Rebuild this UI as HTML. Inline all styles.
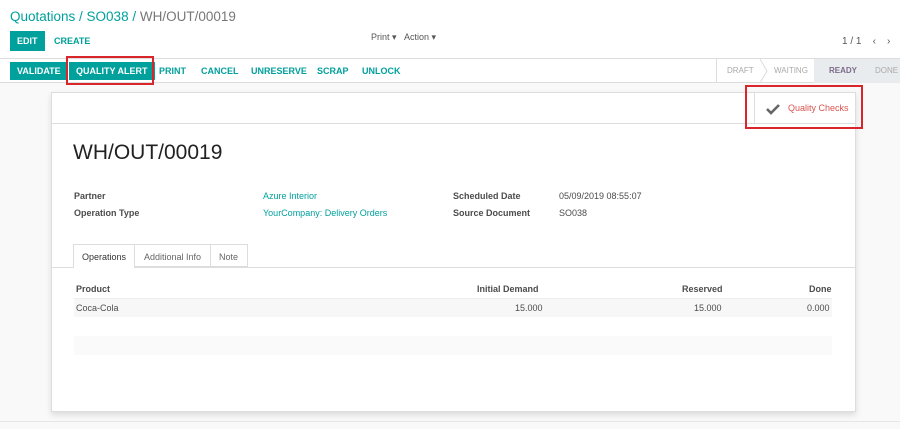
<!DOCTYPE html>
<html><head><style>
*{box-sizing:border-box;margin:0;padding:0}
body{width:900px;height:429px;overflow:hidden;background:#f9f9f9;font-family:"Liberation Sans",sans-serif;font-size:9px;color:#4c4c4c;position:relative}
.a{position:absolute;white-space:nowrap}
.teal{color:#00a09d}
.top{position:absolute;left:0;top:0;width:900px;height:59px;background:#fff;border-bottom:1px solid #ddd}
.sb{position:absolute;left:0;top:59px;width:900px;height:24px;background:#fff;border-bottom:1px solid #ddd}
.btn{position:absolute;font-weight:bold;font-size:9px;height:18px;line-height:18px;padding:0 7px}
.sheet{position:absolute;left:51px;top:92px;width:805px;height:320px;background:#fff;border:1px solid #ddd;box-shadow:0 3px 6px rgba(0,0,0,.12)}
b{color:#4c4c4c}
</style></head><body>
<div class="top"></div>
<div class="a" style="left:10px;top:9px;font-size:13.5px;color:#00a09d">Quotations / SO038 / <span style="color:#777">WH/OUT/00019</span></div>
<div class="btn" style="left:10px;top:31px;height:20px;line-height:20px;background:#00a09d;color:#fff">EDIT</div>
<div class="btn teal" style="left:47px;top:32px">CREATE</div>
<div class="a" style="left:371px;top:32px;color:#555">Print ▾ &nbsp;&nbsp;Action ▾</div>
<div class="a" style="left:842px;top:36px;color:#555;font-size:10px">1 / 1 &nbsp;&nbsp; ‹ &nbsp;&nbsp; ›</div>
<div class="sb"></div>
<div class="btn" style="left:10px;top:62px;background:#00a09d;color:#fff">VALIDATE</div>
<div class="btn" style="left:69px;top:62px;background:#00a09d;color:#fff">QUALITY ALERT</div>
<div style="position:absolute;left:66px;top:56px;width:88px;height:29px;border:2px solid #d9262b"></div>
<div class="btn teal" style="left:152px;top:62px">PRINT</div>
<div class="btn teal" style="left:194px;top:62px">CANCEL</div>
<div class="btn teal" style="left:244px;top:62px">UNRESERVE</div>
<div class="btn teal" style="left:310px;top:62px">SCRAP</div>
<div class="btn teal" style="left:355px;top:62px">UNLOCK</div>
<div style="position:absolute;left:716px;top:59px;width:1px;height:24px;background:#ddd"></div>
<div style="position:absolute;left:814px;top:59px;width:86px;height:24px;background:#e9ecef"></div>
<div class="a" style="left:727px;top:66px;color:#aaa;font-size:8px">DRAFT</div>
<div class="a" style="left:774px;top:66px;color:#aaa;font-size:8px">WAITING</div>
<div class="a" style="left:829px;top:66px;color:#7c6b8a;font-size:8px;font-weight:bold">READY</div>
<div class="a" style="left:875px;top:66px;color:#aaa;font-size:8px">DONE</div>
<svg class="a" style="left:760px;top:59px" width="140" height="24"><polyline points="0,0 7,12 0,24" fill="none" stroke="#ddd"/><polygon points="108,0 115,12 108,24" fill="#e9ecef"/></svg>
<div class="sheet"></div>
<div style="position:absolute;left:51px;top:123px;width:805px;height:1px;background:#ddd"></div>
<div style="position:absolute;left:754px;top:92px;width:1px;height:31px;background:#ddd"></div>
<div style="position:absolute;left:745px;top:85px;width:118px;height:44px;border:2px solid #d9262b"></div>
<svg class="a" style="left:766px;top:103px" width="14" height="12"><path d="M1 6 L5 10 L13 2" fill="none" stroke="#666" stroke-width="2.6"/></svg>
<div class="a" style="left:788px;top:103px;color:#d9534f">Quality Checks</div>
<div class="a" style="left:73px;top:141px;font-size:21px;color:#222">WH/OUT/00019</div>
<div class="a" style="left:74px;top:191px"><b>Partner</b></div>
<div class="a" style="left:74px;top:208px"><b>Operation Type</b></div>
<div class="a teal" style="left:263px;top:191px">Azure Interior</div>
<div class="a teal" style="left:263px;top:208px">YourCompany: Delivery Orders</div>
<div class="a" style="left:453px;top:191px"><b>Scheduled Date</b></div>
<div class="a" style="left:453px;top:208px"><b>Source Document</b></div>
<div class="a" style="left:559px;top:191px">05/09/2019 08:55:07</div>
<div class="a" style="left:559px;top:208px">SO038</div>
<div style="position:absolute;left:51px;top:267px;width:805px;height:1px;background:#ddd"></div>
<div style="position:absolute;left:73px;top:244px;width:62px;height:24px;background:#fff;border:1px solid #ddd;border-bottom:none"></div>
<div class="a" style="left:82px;top:252px;color:#333">Operations</div>
<div style="position:absolute;left:135px;top:244px;width:76px;height:23px;border:1px solid #ddd;border-left:none"></div>
<div class="a" style="left:144px;top:252px;color:#666">Additional Info</div>
<div style="position:absolute;left:211px;top:244px;width:37px;height:23px;border:1px solid #ddd;border-left:none"></div>
<div class="a" style="left:219px;top:252px;color:#666">Note</div>
<div class="a" style="left:76px;top:284px"><b>Product</b></div>
<div class="a" style="left:477px;top:284px"><b>Initial Demand</b></div>
<div class="a" style="left:682px;top:284px"><b>Reserved</b></div>
<div class="a" style="left:809px;top:284px"><b>Done</b></div>
<div style="position:absolute;left:74px;top:298px;width:758px;height:19px;background:#f7f7f7;border-top:1px solid #eee"></div>
<div class="a" style="left:76px;top:303px">Coca-Cola</div>
<div class="a" style="left:515px;top:303px">15.000</div>
<div class="a" style="left:694px;top:303px">15.000</div>
<div class="a" style="left:807px;top:303px">0.000</div>
<div style="position:absolute;left:74px;top:336px;width:758px;height:19px;background:#fafafa"></div>
<div style="position:absolute;left:0;top:421px;width:900px;height:1px;background:#e6e6e6"></div>
</body></html>
